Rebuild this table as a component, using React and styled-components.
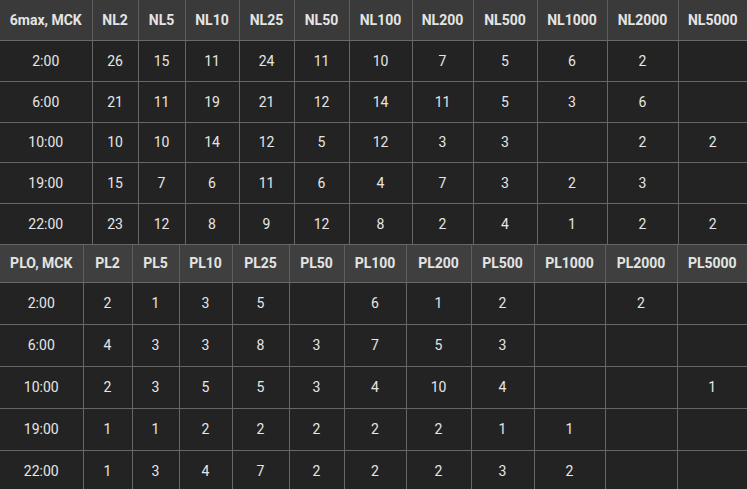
import React from "react";
import styled, { createGlobalStyle } from "styled-components";

const GlobalStyle = createGlobalStyle`
  html, body {
    margin: 0;
    padding: 0;
    background: #232323;
  }
`;

const Page = styled.div`
  width: 747px;
  font-family: Roboto, "Liberation Sans", Arial, sans-serif;
`;

const Table = styled.table`
  width: 747px;
  table-layout: fixed;
  border-collapse: collapse;
  border-spacing: 0;
`;

const HeadCell = styled.th`
  height: ${(p) => p.$h}px;
  padding: 0;
  background: ${(p) => p.$bg};
  color: #e4e4e4;
  font-size: 14px;
  font-weight: 700;
  text-align: center;
  white-space: nowrap;
  border-right: 1px solid #5e5e5e;
  border-bottom: 1px solid #6a6a6a;
  &:last-child {
    border-right: none;
  }
`;

const Cell = styled.td`
  height: ${(p) => p.$h}px;
  padding: 0;
  background: #232323;
  color: #e6e6e6;
  font-size: 14px;
  font-weight: 400;
  text-align: center;
  border-right: 1px solid #666;
  border-bottom: 1px solid #666;
  &:last-child {
    border-right: none;
  }
`;

const Row = styled.tr``;

const nlTable = {
  widths: [92, 46, 47, 54, 55, 55, 63, 61, 64, 70, 71, 69],
  head: ["6max, MCK", "NL2", "NL5", "NL10", "NL25", "NL50", "NL100", "NL200", "NL500", "NL1000", "NL2000", "NL5000"],
  headH: 40,
  rowH: 39.8,
  headBg: "#3a3a3a",
  rows: [
    ["2:00", 26, 15, 11, 24, 11, 10, 7, 5, 6, 2, ""],
    ["6:00", 21, 11, 19, 21, 12, 14, 11, 5, 3, 6, ""],
    ["10:00", 10, 10, 14, 12, 5, 12, 3, 3, "", 2, 2],
    ["19:00", 15, 7, 6, 11, 6, 4, 7, 3, 2, 3, ""],
    ["22:00", 23, 12, 8, 9, 12, 8, 2, 4, 1, 2, 2],
  ],
};

const ploTable = {
  widths: [83, 49, 47, 53, 57, 55, 62, 65, 63, 71, 72, 70],
  head: ["PLO, MCK", "PL2", "PL5", "PL10", "PL25", "PL50", "PL100", "PL200", "PL500", "PL1000", "PL2000", "PL5000"],
  headH: 37,
  rowH: 41,
  headBg: "#3f3f3f",
  rows: [
    ["2:00", 2, 1, 3, 5, "", 6, 1, 2, "", 2, ""],
    ["6:00", 4, 3, 3, 8, 3, 7, 5, 3, "", "", ""],
    ["10:00", 2, 3, 5, 5, 3, 4, 10, 4, "", "", 1],
    ["19:00", 1, 1, 2, 2, 2, 2, 2, 1, 1, "", ""],
    ["22:00", 1, 3, 4, 7, 2, 2, 2, 3, 2, "", ""],
  ],
};

const Schedule = ({ data }) => (
  <Table>
    <colgroup>
      {data.widths.map((w, i) => (
        <col key={i} style={{ width: w }} />
      ))}
    </colgroup>
    <thead>
      <Row>
        {data.head.map((h) => (
          <HeadCell key={h} $h={data.headH} $bg={data.headBg}>
            {h}
          </HeadCell>
        ))}
      </Row>
    </thead>
    <tbody>
      {data.rows.map((r, i) => (
        <Row key={i}>
          {r.map((v, j) => (
            <Cell key={j} $h={data.rowH}>
              {v}
            </Cell>
          ))}
        </Row>
      ))}
    </tbody>
  </Table>
);

const App = () => (
  <Page>
    <GlobalStyle />
    <Schedule data={nlTable} />
    <Schedule data={ploTable} />
  </Page>
);

export default App;
